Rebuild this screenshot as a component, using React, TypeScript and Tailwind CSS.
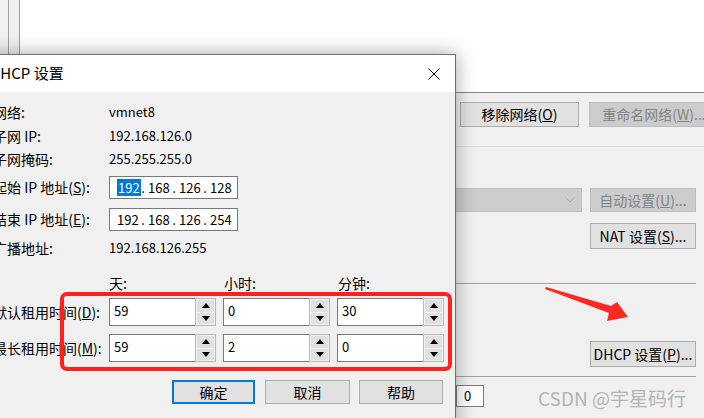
import React from 'react';

function Arrow({ down }: { down?: boolean }) {
  return (
    <svg width="8" height="5" viewBox="0 0 8 5">
      {down ? <polygon points="0,0 8,0 4,5" fill="#000" /> : <polygon points="0,5 8,5 4,0" fill="#000" />}
    </svg>
  );
}

function SpinBox({ value }: { value: string }) {
  return (
    <div className="flex h-[28px] w-[107px]">
      <div className="flex flex-1 items-center border border-r-0 border-[#7a7a7a] bg-white pb-[3px] pl-[4px] text-[13px]">
        {value}
      </div>
      <div className="flex w-[21px] flex-col gap-[1px] border border-[#b9b9b9] bg-[#f0f0f0] p-[1px]">
        <div className="flex flex-1 items-center justify-center bg-[#e1e1e1]">
          <Arrow />
        </div>
        <div className="flex flex-1 items-center justify-center bg-[#e1e1e1]">
          <Arrow down />
        </div>
      </div>
    </div>
  );
}

function IpBox({ parts, selected }: { parts: string[]; selected?: boolean }) {
  return (
    <div className="flex h-[23px] w-[129px] items-center border border-[#7a7a7a] bg-white pl-[7px] text-[13px]">
      {parts.map((p, i) => (
        <React.Fragment key={i}>
          {i > 0 && <span className="w-[10px] text-center">.</span>}
          {i === 0 && selected ? (
            <span className="flex w-[21px] items-center">
              <span className="bg-[#0078d7] px-[1px] leading-[17px] text-white">{p}</span>
              <span className="h-[17px] w-[1px] bg-[#ff8000]" />
            </span>
          ) : (
            <span className="w-[21px] text-center">{p}</span>
          )}
        </React.Fragment>
      ))}
    </div>
  );
}

function Btn({ children, w, disabled, focus }: { children: React.ReactNode; w: string; disabled?: boolean; focus?: boolean }) {
  const base = 'flex items-center justify-center whitespace-nowrap';
  if (disabled) return <div className={`${base} ${w} border border-[#bfbfbf] bg-[#cccccc] text-[#838383]`}>{children}</div>;
  if (focus) return <div className={`${base} ${w} border-2 border-[#0078d7] bg-[#e1e1e1]`}>{children}</div>;
  return <div className={`${base} ${w} border border-[#adadad] bg-[#e1e1e1]`}>{children}</div>;
}

const u = (c: string) => <span className="underline">{c}</span>;

export default function App() {
  const infoRows = [
    { label: '网络:', value: 'vmnet8', h: 'h-[24px] mt-[8px]' },
    { label: '子网 IP:', value: '192.168.126.0', h: 'h-[24px]' },
    { label: '子网掩码:', value: '255.255.255.0', h: 'h-[22px]' },
  ];

  return (
    <div className="relative h-[418px] w-[704px] overflow-hidden bg-[#f0f0f0] font-['Noto_Sans_CJK_SC',sans-serif] text-black">
      {/* window behind */}
      <div className="flex h-[93px] border-b border-[#828790] bg-white">
        <div className="w-[9px] border-r border-[#a0a0a0] bg-[#f0f0f0]" />
        <div className="w-[11px] border-r border-[#a0a0a0] bg-[#f0f0f0]" />
      </div>

      <div className="ml-[455px] w-[249px] text-[14px]">
        <div className="flex h-[54px] items-start border-b border-[#dadada] pt-[9px]">
          <div className="ml-[5px]">
            <Btn w="w-[119px] h-[25px]">移除网络({u('O')})</Btn>
          </div>
          <div className="ml-[10px]">
            <Btn w="w-[130px] h-[25px]" disabled>重命名网络({u('W')})...</Btn>
          </div>
        </div>

        <div className="mt-[41px] flex h-[24px]">
          <div className="flex w-[127px] items-center justify-end border border-[#bfbfbf] bg-[#cccccc] pr-[6px]">
            <svg width="10" height="6" viewBox="0 0 10 6">
              <polyline points="0.5,0.5 5,5 9.5,0.5" fill="none" stroke="#a8a8a8" strokeWidth="1" />
            </svg>
          </div>
          <div className="ml-[8px]">
            <Btn w="w-[106px] h-[24px]" disabled>自动设置({u('U')})...</Btn>
          </div>
        </div>

        <div className="ml-[135px] mt-[11px]">
          <Btn w="w-[106px] h-[26px]">NAT 设置({u('S')})...</Btn>
        </div>

        <div className="mt-[34px] h-[1px] w-[241px] bg-[#a0a0a0]" />

        <div className="ml-[135px] mt-[57px]">
          <Btn w="w-[106px] h-[26px]">DHCP 设置({u('P')})...</Btn>
        </div>

        <div className="mt-[9px] h-[1px] w-[241px] bg-[#a0a0a0]" />

        <div className="ml-[1px] mt-[8px] flex h-[22px] w-[28px] items-center border border-[#7a7a7a] bg-white pl-[7px] text-[13px]">
          0
        </div>
      </div>

      {/* dialog */}
      <div className="absolute left-[-20px] top-[54px] h-[380px] w-[476px] border border-[#707070] bg-[#f0f0f0] shadow-[0_0_18px_rgba(0,0,0,0.35)]">
        <div className="flex h-[37px] items-center justify-between bg-white pl-[9px] pr-[15px]">
          <span className="text-[15px]">DHCP 设置</span>
          <svg width="12" height="12" viewBox="0 0 12 12">
            <path d="M0.5 0.5 L11.5 11.5 M11.5 0.5 L0.5 11.5" stroke="#000" strokeWidth="1" />
          </svg>
        </div>

        <div className="flex flex-col pl-[12px] text-[14px]">
          {infoRows.map((r) => (
            <div key={r.label} className={`flex items-center ${r.h}`}>
              <span className="w-[116px] whitespace-nowrap">{r.label}</span>
              <span className="text-[13px]">{r.value}</span>
            </div>
          ))}
          <div className="mt-[6px] flex h-[23px] items-center">
            <span className="w-[116px] whitespace-nowrap">起始 IP 地址({u('S')}):</span>
            <IpBox parts={['192', '168', '126', '128']} selected />
          </div>
          <div className="mt-[9px] flex h-[23px] items-center">
            <span className="w-[116px] whitespace-nowrap">结束 IP 地址({u('E')}):</span>
            <IpBox parts={['192', '168', '126', '254']} />
          </div>
          <div className="mt-[6px] flex h-[22px] items-center">
            <span className="w-[116px] whitespace-nowrap">广播地址:</span>
            <span className="text-[13px]">192.168.126.255</span>
          </div>

          <div className="mt-[15px] flex h-[18px] items-center">
            <span className="w-[116px]" />
            <div className="flex gap-[7px]">
              <span className="w-[107px]">天:</span>
              <span className="w-[107px] pl-[1px]">小时:</span>
              <span className="w-[107px] pl-[1px]">分钟:</span>
            </div>
          </div>

          <div className="mt-[6px] flex h-[28px] items-center">
            <span className="w-[116px] whitespace-nowrap">默认租用时间({u('D')}):</span>
            <div className="flex gap-[7px]">
              <SpinBox value="59" />
              <SpinBox value="0" />
              <SpinBox value="30" />
            </div>
          </div>
          <div className="mt-[8px] flex h-[28px] items-center">
            <span className="w-[116px] whitespace-nowrap">最长租用时间({u('M')}):</span>
            <div className="flex gap-[7px]">
              <SpinBox value="59" />
              <SpinBox value="2" />
              <SpinBox value="0" />
            </div>
          </div>

          <div className="ml-[179px] mt-[18px] flex h-[24px] gap-[10px]">
            <Btn w="w-[83px]" focus>确定</Btn>
            <div className="flex gap-[9px]">
              <Btn w="w-[85px]">取消</Btn>
              <Btn w="w-[84px]">帮助</Btn>
            </div>
          </div>
        </div>
      </div>

      {/* annotation */}
      <div className="absolute left-[60px] top-[292px] h-[79px] w-[392px] rounded-[7px] border-4 border-[#ff2020]" />
      <svg className="absolute left-0 top-0" width="704" height="418" viewBox="0 0 704 418">
        <polygon points="546,287 611,306 617,302 628,317 607,321 609,313 545,289" fill="#ff2a1f" />
      </svg>
      <div className="absolute left-[538px] top-[385px] whitespace-nowrap text-[19px] leading-[26px] text-[#b4b4b4]">
        CSDN @宇星码行
      </div>
    </div>
  );
}
